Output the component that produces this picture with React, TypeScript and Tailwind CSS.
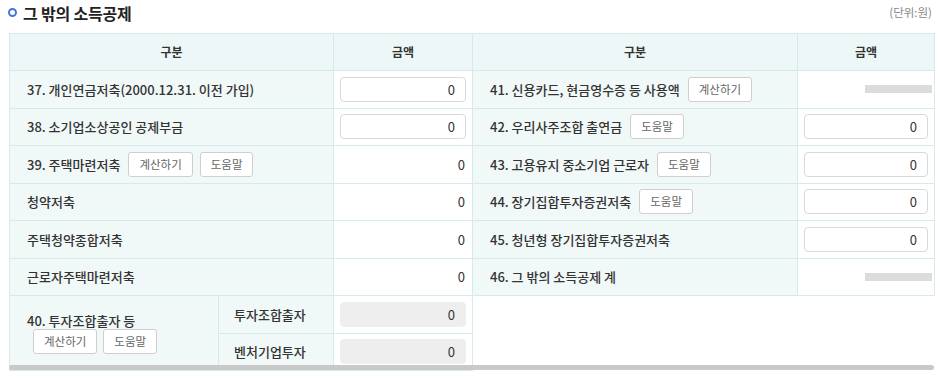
import React from "react";

const font = { fontFamily: '"Noto Sans CJK KR", "Noto Sans", sans-serif' };

function Btn({ children }: { children: React.ReactNode }) {
  return (
    <span className="inline-flex items-center justify-center h-[25px] px-[10px] border border-[#cfcfcf] rounded-[3px] bg-white text-[11.5px] font-normal text-[#666] leading-none">
      {children}
    </span>
  );
}

function Input({ disabled }: { disabled?: boolean }) {
  return (
    <div
      className={
        "h-[25px] mx-[6px] rounded-[4px] border flex items-center justify-end pr-[10px] text-[13px] text-[#333] " +
        (disabled ? "bg-[#eeeeee] border-[#eeeeee]" : "bg-white border-[#d9d9d9]")
      }
    >
      0
    </div>
  );
}

function Plain() {
  return <div className="text-right pr-[7px] text-[13px] text-[#333]">0</div>;
}

function Bar() {
  return (
    <div className="flex justify-end pr-[2px]">
      <div className="w-[67px] h-[8px] bg-[#dcdcdc]" />
    </div>
  );
}

const lab = "bg-[#f1f8f8] border border-[#d6e9eb] pl-[17px] text-[13px] font-medium text-[#333] h-[37.5px]";
const amt = "bg-white border border-[#d6e9eb] h-[37.5px]";

function Label({ text, btns }: { text: string; btns?: string[] }) {
  return (
    <div className="flex items-center gap-[7px]">
      <span className="mr-[1px]">{text}</span>
      {btns?.map((b) => (
        <Btn key={b}>{b}</Btn>
      ))}
    </div>
  );
}

export default function App() {
  return (
    <div className="w-[940px] h-[380px] bg-white overflow-hidden" style={font}>
      <div className="flex items-center justify-between h-[25px] pl-[8px] pr-[8px]">
        <div className="flex items-center gap-[6px]">
          <span className="w-[9px] h-[9px] rounded-full border-[2px] border-[#3f78d8]" />
          <span className="text-[16px] font-bold text-[#222] tracking-[-0.2px]">그 밖의 소득공제</span>
        </div>
        <span className="text-[11.5px] text-[#888]">(단위:원)</span>
      </div>
      <div className="px-[9px] pt-[8px] relative">
        <table className="w-[925px] border-collapse table-fixed">
          <colgroup>
            <col className="w-[209px]" />
            <col className="w-[115px]" />
            <col className="w-[139px]" />
            <col className="w-[325px]" />
            <col className="w-[137px]" />
          </colgroup>
          <thead>
            <tr>
              <th colSpan={2} className="bg-[#eef7f7] border border-[#d6e9eb] h-[37px] text-[12px] font-bold text-[#333]">구분</th>
              <th className="bg-[#eef7f7] border border-[#d6e9eb] text-[12px] font-bold text-[#333]">금액</th>
              <th className="bg-[#eef7f7] border border-[#d6e9eb] text-[12px] font-bold text-[#333]">구분</th>
              <th className="bg-[#eef7f7] border border-[#d6e9eb] text-[12px] font-bold text-[#333]">금액</th>
            </tr>
          </thead>
          <tbody>
            <tr>
              <td colSpan={2} className={lab}><Label text="37. 개인연금저축(2000.12.31. 이전 가입)" /></td>
              <td className={amt}><Input /></td>
              <td className={lab}><Label text="41. 신용카드, 현금영수증 등 사용액" btns={["계산하기"]} /></td>
              <td className={amt}><Bar /></td>
            </tr>
            <tr>
              <td colSpan={2} className={lab}><Label text="38. 소기업소상공인 공제부금" /></td>
              <td className={amt}><Input /></td>
              <td className={lab}><Label text="42. 우리사주조합 출연금" btns={["도움말"]} /></td>
              <td className={amt}><Input /></td>
            </tr>
            <tr>
              <td colSpan={2} className={lab}><Label text="39. 주택마련저축" btns={["계산하기", "도움말"]} /></td>
              <td className={amt}><Plain /></td>
              <td className={lab}><Label text="43. 고용유지 중소기업 근로자" btns={["도움말"]} /></td>
              <td className={amt}><Input /></td>
            </tr>
            <tr>
              <td colSpan={2} className={lab}><Label text="청약저축" /></td>
              <td className={amt}><Plain /></td>
              <td className={lab}><Label text="44. 장기집합투자증권저축" btns={["도움말"]} /></td>
              <td className={amt}><Input /></td>
            </tr>
            <tr>
              <td colSpan={2} className={lab}><Label text="주택청약종합저축" /></td>
              <td className={amt}><Plain /></td>
              <td className={lab}><Label text="45. 청년형 장기집합투자증권저축" /></td>
              <td className={amt}><Input /></td>
            </tr>
            <tr>
              <td colSpan={2} className={lab}><Label text="근로자주택마련저축" /></td>
              <td className={amt}><Plain /></td>
              <td className={lab}><Label text="46. 그 밖의 소득공제 계" /></td>
              <td className={amt}><Bar /></td>
            </tr>
            <tr>
              <td rowSpan={2} className="bg-[#f1f8f8] border border-[#d6e9eb] pl-[17px] text-[13px] font-medium text-[#333]">
                <div className="flex flex-col items-start">
                  <span className="leading-[17px]">40. 투자조합출자 등</span>
                  <div className="flex gap-[6px] ml-[6px]">
                    <Btn>계산하기</Btn>
                    <Btn>도움말</Btn>
                  </div>
                </div>
              </td>
              <td className="bg-[#f1f8f8] border border-[#d6e9eb] pl-[15px] text-[13px] font-medium text-[#333] h-[37.5px]">투자조합출자</td>
              <td className={amt}><Input disabled /></td>
              <td colSpan={2} rowSpan={2} className="bg-white border-l border-[#d6e9eb]" />
            </tr>
            <tr>
              <td className="bg-[#f1f8f8] border border-[#d6e9eb] pl-[15px] text-[13px] font-medium text-[#333] h-[37.5px]">벤처기업투자</td>
              <td className={amt}><Input disabled /></td>
            </tr>
          </tbody>
        </table>
        <div className="absolute left-[9px] top-[340px] w-[925px] h-[5px] rounded-full bg-[#c9c9c9]" />
      </div>
    </div>
  );
}
